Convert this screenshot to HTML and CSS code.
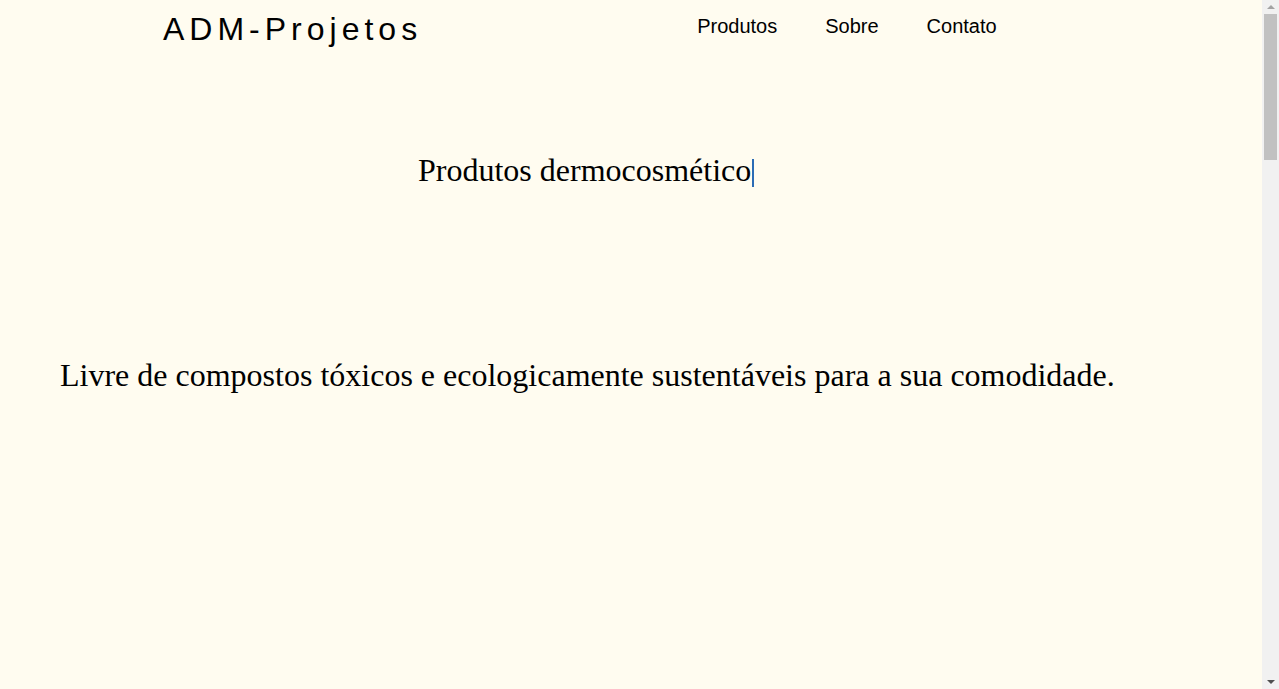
FILE: index.html
```html
<!DOCTYPE html>
<html lang="pt-BR">
<head>
<meta charset="utf-8">
<title>ADM-Projetos</title>
<link rel="stylesheet" href="styles.css">
</head>
<body>
<header class="topbar">
  <div class="logo">ADM-Projetos</div>
  <nav class="menu">
    <a href="#" class="menu-link">Produtos</a>
    <a href="#" class="menu-link">Sobre</a>
    <a href="#" class="menu-link">Contato</a>
  </nav>
</header>
<main class="hero">
  <h1 class="typing"><span class="typing-text">Produtos dermocosmético</span><span class="caret"></span></h1>
  <p class="tagline">Livre de compostos tóxicos e ecologicamente sustentáveis para a sua comodidade.</p>
</main>
<div class="scrollbar" aria-hidden="true">
  <span class="sb-arrow sb-up"></span>
  <span class="sb-thumb"></span>
  <span class="sb-arrow sb-down"></span>
</div>
</body>
</html>
```

FILE: styles.css
```css
html, body {
  margin: 0;
  padding: 0;
}
body {
  background: #fffcf0;
  color: #000;
  font-family: "Liberation Serif", "Times New Roman", serif;
  min-height: 3120px;
}
.topbar {
  display: flex;
  align-items: flex-start;
  padding-left: 163px;
}
.logo {
  font-family: "Liberation Sans", Arial, sans-serif;
  font-size: 32px;
  letter-spacing: 5px;
  margin-top: 11px;
}
.menu {
  display: flex;
  gap: 48px;
  margin-left: 275px;
  margin-top: 15px;
}
.menu-link {
  font-family: "Liberation Sans", Arial, sans-serif;
  font-size: 20px;
  color: #000;
  text-decoration: none;
}
.hero {
  display: flex;
  flex-direction: column;
}
.typing {
  margin: 104px 0 0 418px;
  font-size: 32px;
  font-weight: normal;
  line-height: 1.15;
}
.caret {
  display: inline-block;
  width: 2px;
  height: 28px;
  margin-left: 1px;
  vertical-align: -6px;
  background: #2b6cb5;
}
.tagline {
  margin: 168px 0 0 60px;
  font-size: 32px;
  line-height: 1.15;
}
.scrollbar {
  position: fixed;
  top: 0;
  right: 0;
  width: 17px;
  height: 100%;
  background: #f1f1f1;
  display: flex;
  flex-direction: column;
  align-items: center;
}
.sb-arrow {
  width: 0;
  height: 0;
  border-left: 4px solid transparent;
  border-right: 4px solid transparent;
}
.sb-up {
  margin-top: 5px;
  border-bottom: 4px solid #a3a3a3;
}
.sb-thumb {
  width: 13px;
  height: 146px;
  margin-top: 5px;
  background: #c1c1c1;
}
.sb-down {
  margin-top: auto;
  margin-bottom: 5px;
  border-top: 4px solid #505050;
}
```
